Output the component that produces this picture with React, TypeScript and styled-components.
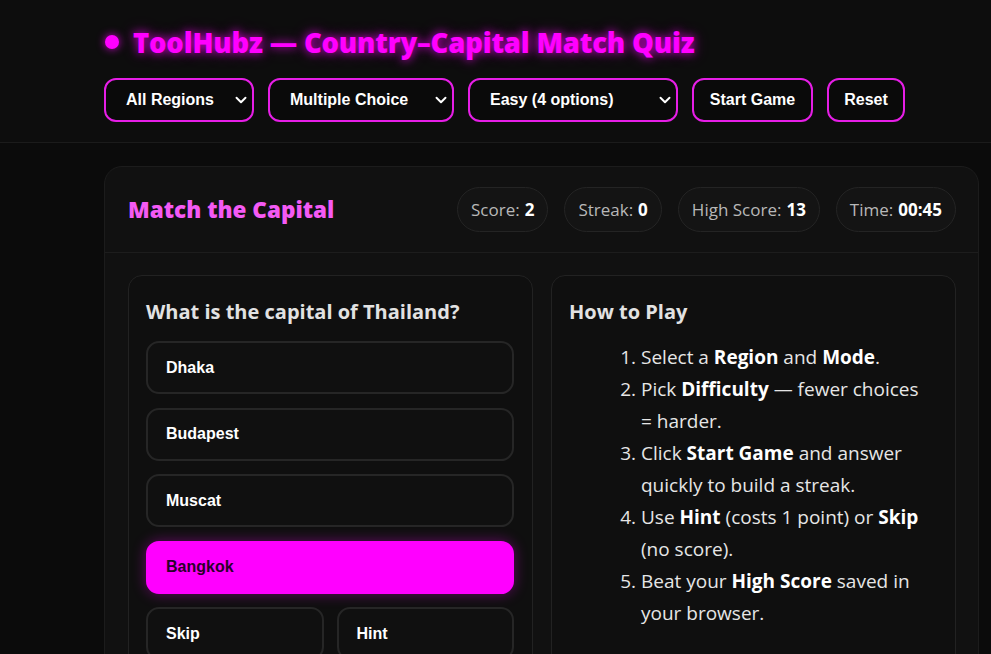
import React from "react";
import styled, { createGlobalStyle } from "styled-components";

const Global = createGlobalStyle`
  html, body { margin: 0; padding: 0; background: #0b0b0b; }
  body { font-family: "Open Sans", "Segoe UI", sans-serif; color: #e6e6e6; overflow: hidden; }
  * { box-sizing: border-box; }
`;

const Page = styled.div`
  width: 991px;
  height: 654px;
  background: #0b0b0b;
  overflow: hidden;
`;

const Header = styled.header`
  background: #0d0d0d;
  border-bottom: 1px solid #1b1b1b;
  padding: 24px 0 20px 104px;
`;

const Title = styled.h1`
  margin: 0;
  display: flex;
  align-items: center;
  gap: 14px;
  height: 36px;
  font-size: 27.5px;
  font-weight: 800;
  color: #ff00ff;
  text-shadow: 0 0 8px rgba(255, 0, 255, 0.7), 0 0 16px rgba(255, 0, 255, 0.35);
  letter-spacing: -0.2px;
`;

const Dot = styled.span`
  width: 14px;
  height: 14px;
  border-radius: 50%;
  background: #ff00ff;
  box-shadow: 0 0 8px rgba(255, 0, 255, 0.8);
  margin-left: 1px;
`;

const Controls = styled.div`
  display: flex;
  gap: 14px;
  margin-top: 18px;
`;

const SelectBox = styled.div<{ w: number }>`
  width: ${(p) => p.w}px;
  height: 44px;
  border: 2px solid #e61ee6;
  border-radius: 12px;
  background: #0a0a0a;
  display: flex;
  align-items: center;
  justify-content: space-between;
  padding: 0 2px 0 20px;
  font-family: "Liberation Sans", Arial, sans-serif;
  font-weight: 700;
  font-size: 16px;
  color: #fff;
`;

const Btn = styled.div<{ w: number }>`
  width: ${(p) => p.w}px;
  height: 44px;
  border: 2px solid #e61ee6;
  border-radius: 12px;
  background: #0a0a0a;
  display: flex;
  align-items: center;
  justify-content: center;
  font-family: "Liberation Sans", Arial, sans-serif;
  font-weight: 700;
  font-size: 16px;
  color: #fff;
`;

const Main = styled.main`
  padding: 23px 0 0 104px;
`;

const Card = styled.section`
  width: 875px;
  background: #111111;
  border: 1px solid #1c1c1c;
  border-radius: 18px;
`;

const CardHead = styled.div`
  display: flex;
  align-items: center;
  justify-content: space-between;
  height: 86px;
  padding: 0 22px 0 23px;
  border-bottom: 1px solid #1d1d1d;
`;

const CardTitle = styled.h2`
  margin: 0;
  font-size: 22.5px;
  font-weight: 800;
  color: #f45af4;
`;

const Stats = styled.div`
  display: flex;
  gap: 16px;
`;

const Pill = styled.div`
  height: 45px;
  padding: 0 13px;
  border: 1px solid #242424;
  background: #141414;
  border-radius: 23px;
  display: flex;
  align-items: center;
  font-size: 17px;
  color: #b8b8b8;
  b { color: #fff; font-weight: 700; margin-left: 5px; }
`;

const Body = styled.div`
  display: grid;
  grid-template-columns: 405px 405px;
  gap: 18px;
  padding: 22px 23px 0 23px;
`;

const Panel = styled.div`
  border: 1px solid #222;
  border-radius: 14px;
  background: #0f0f0f;
  padding: 23px 18px 18px 17px;
  height: 400px;
`;

const PanelTitle = styled.h3`
  margin: 0 0 16px;
  height: 26px;
  line-height: 26px;
  font-size: 20px;
  font-weight: 700;
  color: #e2e2e2;
`;

const Options = styled.div`
  display: flex;
  flex-direction: column;
  gap: 13.5px;
`;

const Option = styled.div<{ active?: boolean }>`
  height: 53px;
  border-radius: 13px;
  border: 2px solid ${(p) => (p.active ? "#ff00ff" : "#262626")};
  background: ${(p) => (p.active ? "#ff00ff" : "#101010")};
  box-shadow: ${(p) => (p.active ? "0 0 14px rgba(255,0,255,0.35)" : "none")};
  display: flex;
  align-items: center;
  padding-left: 18px;
  font-family: "Liberation Sans", Arial, sans-serif;
  font-weight: 700;
  font-size: 16px;
  color: ${(p) => (p.active ? "#2a002a" : "#fff")};
`;

const Row = styled.div`
  display: grid;
  grid-template-columns: 1fr 1fr;
  gap: 13px;
`;

const Steps = styled.ol`
  margin: 1px 0 0;
  padding: 0 12px 0 72px;
  font-size: 19px;
  line-height: 32px;
  color: #e6e6e6;
  b { color: #fff; font-weight: 700; }
`;

const Chevron = () => (
  <svg width="18" height="18" viewBox="0 0 24 24" fill="none" stroke="#fff" strokeWidth="2.6" strokeLinecap="round" strokeLinejoin="round">
    <path d="M6 9l6 6 6-6" />
  </svg>
);

export default function App() {
  return (
    <Page>
      <Global />
      <Header>
        <Title>
          <Dot />
          ToolHubz — Country–Capital Match Quiz
        </Title>
        <Controls>
          <SelectBox w={150}>All Regions <Chevron /></SelectBox>
          <SelectBox w={186}>Multiple Choice <Chevron /></SelectBox>
          <SelectBox w={210}>Easy (4 options) <Chevron /></SelectBox>
          <Btn w={121}>Start Game</Btn>
          <Btn w={78}>Reset</Btn>
        </Controls>
      </Header>
      <Main>
        <Card>
          <CardHead>
            <CardTitle>Match the Capital</CardTitle>
            <Stats>
              <Pill>Score:<b>2</b></Pill>
              <Pill>Streak:<b>0</b></Pill>
              <Pill>High Score:<b>13</b></Pill>
              <Pill>Time:<b>00:45</b></Pill>
            </Stats>
          </CardHead>
          <Body>
            <Panel>
              <PanelTitle>What is the capital of Thailand?</PanelTitle>
              <Options>
                <Option>Dhaka</Option>
                <Option>Budapest</Option>
                <Option>Muscat</Option>
                <Option active>Bangkok</Option>
                <Row>
                  <Option>Skip</Option>
                  <Option>Hint</Option>
                </Row>
              </Options>
            </Panel>
            <Panel>
              <PanelTitle>How to Play</PanelTitle>
              <Steps>
                <li>Select a <b>Region</b> and <b>Mode</b>.</li>
                <li>Pick <b>Difficulty</b> — fewer choices = harder.</li>
                <li>Click <b>Start Game</b> and answer quickly to build a streak.</li>
                <li>Use <b>Hint</b> (costs 1 point) or <b>Skip</b> (no score).</li>
                <li>Beat your <b>High Score</b> saved in your browser.</li>
              </Steps>
            </Panel>
          </Body>
        </Card>
      </Main>
    </Page>
  );
}
